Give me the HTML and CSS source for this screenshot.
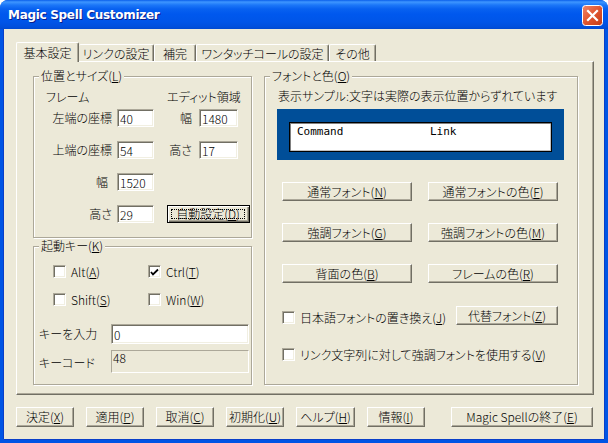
FILE: index.html
```html
<!DOCTYPE html>
<html lang="ja">
<head>
<meta charset="utf-8">
<title>Magic Spell Customizer</title>
<link rel="stylesheet" href="styles.css">
</head>
<body>
<div class="window">
  <div class="titlebar">
    <span class="title">Magic Spell Customizer</span>
    <span class="close">
      <svg width="21" height="21" viewBox="0 0 21 21">
        <defs>
          <linearGradient id="cg" x1="0" y1="0" x2="1" y2="1">
            <stop offset="0" stop-color="#F0876A"/>
            <stop offset="0.5" stop-color="#E0552F"/>
            <stop offset="1" stop-color="#C23B16"/>
          </linearGradient>
        </defs>
        <rect x="0.5" y="0.5" width="20" height="20" rx="3" fill="url(#cg)" stroke="#fff"/>
        <path d="M6 6 L15 15 M15 6 L6 15" stroke="#fff" stroke-width="2.2" stroke-linecap="square"/>
      </svg>
    </span>
  </div>
  <div class="client">
    <div class="tabs">
      <div class="tab active">基本設定</div>
      <div class="tab t2">リンクの設定</div>
      <div class="tab t3">補完</div>
      <div class="tab t4">ワンタッチコールの設定</div>
      <div class="tab t5">その他</div>
    </div>
    <div class="panel">
      <div class="col-left">
        <div class="group g-pos">
          <div class="gtitle">位置とサイズ(<u>L</u>)</div>
          <div class="pos-head">
            <span class="h-frame">フレーム</span>
            <span class="h-edit">エディット領域</span>
          </div>
          <div class="pos-grid">
            <span class="lbl">左端の座標</span>
            <span class="edit">40</span>
            <span class="lbl lbl2">幅</span>
            <span class="edit">1480</span>

            <span class="lbl">上端の座標</span>
            <span class="edit">54</span>
            <span class="lbl lbl2">高さ</span>
            <span class="edit">17</span>

            <span class="lbl lbl-w">幅</span>
            <span class="edit">1520</span>
            <span></span>
            <span></span>

            <span class="lbl">高さ</span>
            <span class="edit">29</span>
            <button class="btn default auto"><span class="focus">自動設定(<u>D</u>)</span></button>
          </div>
        </div>
        <div class="group g-key">
          <div class="gtitle">起動キー(<u>K</u>)</div>
          <div class="chk-grid">
            <div class="chk"><span class="box"></span><span>Alt(<u>A</u>)</span></div>
            <div class="chk"><span class="box checked"><svg width="9" height="9" viewBox="0 0 9 9"><path d="M1 4 L3 6.5 L8 1.5" fill="none" stroke="#000" stroke-width="1.8"/></svg></span><span>Ctrl(<u>T</u>)</span></div>
            <div class="chk"><span class="box"></span><span>Shift(<u>S</u>)</span></div>
            <div class="chk"><span class="box"></span><span>Win(<u>W</u>)</span></div>
          </div>
          <div class="keyrow">
            <span class="klbl">キーを入力</span>
            <span class="edit kedit">0</span>
          </div>
          <div class="keyrow coderow">
            <span class="klbl">キーコード</span>
            <span class="static">48</span>
          </div>
        </div>
      </div>
      <div class="group g-font">
        <div class="gtitle">フォントと色(<u>O</u>)</div>
        <div class="sample-text">表示サンプル:文字は実際の表示位置からずれています</div>
        <div class="preview">
          <div class="preview-inner"><span class="cmd">Command</span><span>Link</span></div>
        </div>
        <div class="btn-grid">
          <button class="btn">通常フォント(<u>N</u>)</button>
          <button class="btn">通常フォントの色(<u>F</u>)</button>
          <button class="btn">強調フォント(<u>G</u>)</button>
          <button class="btn">強調フォントの色(<u>M</u>)</button>
          <button class="btn">背面の色(<u>B</u>)</button>
          <button class="btn">フレームの色(<u>R</u>)</button>
        </div>
        <div class="jrow">
          <div class="chk jchk"><span class="box"></span><span>日本語フォントの置き換え(<u>J</u>)</span></div>
          <button class="btn alt">代替フォント(<u>Z</u>)</button>
        </div>
        <div class="chk vchk"><span class="box"></span><span>リンク文字列に対して強調フォントを使用する(<u>V</u>)</span></div>
      </div>
    </div>
    <div class="footer">
      <button class="btn fb">決定(<u>X</u>)</button>
      <button class="btn fb">適用(<u>P</u>)</button>
      <button class="btn fb">取消(<u>C</u>)</button>
      <button class="btn fb">初期化(<u>U</u>)</button>
      <button class="btn fb fb-w">ヘルプ(<u>H</u>)</button>
      <button class="btn fb">情報(<u>I</u>)</button>
      <button class="btn quit">Magic Spellの終了(<u>E</u>)</button>
    </div>
  </div>
</div>
</body>
</html>
```

FILE: styles.css
```css
* { box-sizing: border-box; }

html, body {
  margin: 0;
  padding: 0;
  background: #fff;
}

body {
  font-family: "Noto Sans CJK JP", "Noto Sans", sans-serif;
  font-size: 12px;
  font-weight: 300;
  line-height: 14px;
  color: #000;
  font-feature-settings: "palt";
}

u { text-decoration-thickness: 1px; text-underline-offset: 1px; }

.window {
  width: 608px;
  height: 443px;
  display: flex;
  flex-direction: column;
  background: #0055E5;
  border-radius: 8px 8px 0 0;
  overflow: hidden;
}

.titlebar {
  flex: none;
  height: 29px;
  display: flex;
  align-items: flex-start;
  justify-content: space-between;
  padding: 0 5px 0 8px;
  background: linear-gradient(to bottom, #0A5FEA 0px, #3E96FF 2px, #1C77F8 5px, #0861F0 9px, #0058EE 14px, #0055E8 22px, #004FDC 27px, #0049D0 29px);
}

.title {
  margin-top: 8px;
  font-family: "DejaVu Sans", sans-serif;
  font-weight: bold;
  font-size: 12px;
  line-height: 14px;
  color: #fff;
  letter-spacing: -0.3px;
  text-shadow: 1px 1px 0 #0A1E8C;
}

.close {
  margin-top: 5px;
  width: 21px;
  height: 21px;
  display: block;
}
.close svg { display: block; }

.client {
  flex: 1;
  margin: 0 4px 4px;
  background: #ECE9D8;
  padding: 13px 10px 0 12px;
  display: flex;
  flex-direction: column;
  box-shadow: -1px 0 0 #0A3FC8, 1px 0 0 #0A3FC8, 0 1px 0 #0A3FC8;
}

/* tabs */
.tabs {
  display: flex;
  align-items: flex-end;
  height: 19px;
}
.tab {
  height: 17px;
  padding-top: 2px;
  text-align: center;
  border-top: 1px solid #fff;
  border-left: 1px solid #fff;
  border-right: 1px solid #716F64;
  box-shadow: inset -1px 0 0 #ACA899;
  border-radius: 2px 2px 0 0;
  white-space: nowrap;
}
.tab.active {
  width: 63px;
  height: 20px;
  padding-top: 3px;
  margin-bottom: -1px;
  position: relative;
  z-index: 1;
  background: #ECE9D8;
}
.t2 { width: 75px; border-left: none; }
.t3 { width: 42px; }
.t4 { width: 133px; }
.t5 { width: 47px; }

/* panel */
.panel {
  height: 334px;
  border-top: 1px solid #fff;
  border-left: 1px solid #fff;
  border-right: 1px solid #716F64;
  border-bottom: 1px solid #716F64;
  box-shadow: inset -1px -1px 0 #ACA899;
  display: flex;
  align-items: flex-start;
  gap: 12px;
  padding: 14px 0 0 16px;
}

.col-left {
  width: 219px;
  display: flex;
  flex-direction: column;
  gap: 8px;
}

.group {
  border: 1px solid #ACA899;
  box-shadow: inset 1px 1px 0 #fff, 1px 1px 0 #fff;
}
.gtitle {
  width: fit-content;
  height: 14px;
  margin: -8px 0 0 5px;
  padding: 0 2px;
  background: #ECE9D8;
  white-space: nowrap;
}

.g-pos { height: 162px; }
.g-key { height: 139px; }
.g-font { width: 314px; height: 309px; }

/* position group */
.pos-head {
  display: flex;
  margin-top: 7px;
  height: 14px;
}
.h-frame { padding-left: 12px; width: 133px; }

.pos-grid {
  margin-top: 5px;
  display: grid;
  grid-template-columns: 83px 37px 45px 39px;
  grid-auto-rows: 18px;
  row-gap: 14px;
}
.lbl {
  text-align: right;
  padding-right: 5px;
  line-height: 18px;
  white-space: nowrap;
}
.lbl2 { padding-right: 7px; }
.lbl-w { padding-right: 9px; }

.edit {
  display: block;
  height: 18px;
  background: #fff;
  border: 1px solid;
  border-color: #ACA899 #fff #fff #ACA899;
  box-shadow: inset 1px 1px 0 #716F64, inset -1px -1px 0 #F1EFE2;
  padding: 1px 0 0 2px;
  line-height: 15px;
  white-space: nowrap;
}

/* buttons */
.btn {
  font: inherit;
  color: #000;
  margin: 0;
  padding: 0;
  height: 19px;
  background: #ECE9D8;
  border: 1px solid;
  border-color: #fff #716F64 #716F64 #fff;
  box-shadow: inset -1px -1px 0 #ACA899;
  display: flex;
  align-items: center;
  justify-content: center;
  white-space: nowrap;
  border-radius: 0;
}
.btn.default {
  border: 1px solid #000;
  box-shadow: inset 1px 1px 0 #fff, inset -1px -1px 0 #716F64, inset -2px -2px 0 #ACA899;
  padding: 3px 4px 3px 3px;
}
.focus {
  flex: 1;
  align-self: stretch;
  border: 1px dotted #000;
  display: flex;
  align-items: center;
  justify-content: center;
  line-height: 10px;
}
.auto {
  grid-column: 3 / 5;
  width: 83px;
  height: 18px;
  margin-left: 13px;
}

/* key group */
.chk-grid {
  display: grid;
  grid-template-columns: 95px 95px;
  row-gap: 15px;
  margin: 12px 0 0 19px;
}
.chk {
  display: flex;
  align-items: center;
  gap: 5px;
  height: 13px;
  white-space: nowrap;
}
.box {
  flex: none;
  width: 13px;
  height: 13px;
  background: #fff;
  border: 1px solid;
  border-color: #ACA899 #fff #fff #ACA899;
  box-shadow: inset 1px 1px 0 #716F64, inset -1px -1px 0 #F1EFE2;
  display: flex;
  align-items: center;
  justify-content: center;
}
.box svg { display: block; margin: 1px 0 0 0; }

.keyrow {
  display: flex;
  align-items: center;
  margin-top: 18px;
  padding-left: 5px;
}
.klbl { width: 72px; white-space: nowrap; }
.kedit { width: 138px; height: 20px; padding-top: 2px; }
.coderow { margin-top: 6px; align-items: flex-start; }
.coderow .klbl { margin-top: 6px; }
.static {
  display: block;
  width: 138px;
  height: 23px;
  border: 1px solid;
  border-color: #ACA899 #fff #fff #ACA899;
  padding: 0 0 0 1px;
  line-height: 14px;
}

/* font group */
.sample-text {
  margin: 6px 0 0 13px;
  white-space: nowrap;
}
.preview {
  width: 287px;
  height: 51px;
  margin: 6px 0 0 12px;
  padding: 13px 12px 8px;
  background: #004E98;
}
.preview-inner {
  height: 30px;
  background: #fff;
  border: 1px solid #000;
  box-shadow: inset 1px 1px 0 #808080, inset -1px -1px 0 #C0C0C0;
  display: flex;
  padding: 2px 0 0 7px;
  font-family: "DejaVu Sans Mono", monospace;
  font-weight: normal;
  font-size: 11px;
  line-height: 14px;
  font-feature-settings: normal;
}
.cmd { width: 133px; }

.btn-grid {
  display: grid;
  grid-template-columns: 130px 130px;
  grid-auto-rows: 19px;
  column-gap: 16px;
  row-gap: 22px;
  margin: 22px 0 0 17px;
}

.jrow {
  display: flex;
  align-items: center;
  margin: 23px 0 0 17px;
}
.jchk { width: 174px; margin-top: 4px; }
.alt { width: 102px; }
.vchk { margin: 23px 0 0 17px; }

/* footer */
.footer {
  display: flex;
  gap: 12px;
  margin-top: 12px;
}
.fb { width: 58px; height: 20px; }
.fb-w { width: 59px; }
.quit { width: 142px; height: 20px; margin-left: auto; margin-right: 1px; }
```
